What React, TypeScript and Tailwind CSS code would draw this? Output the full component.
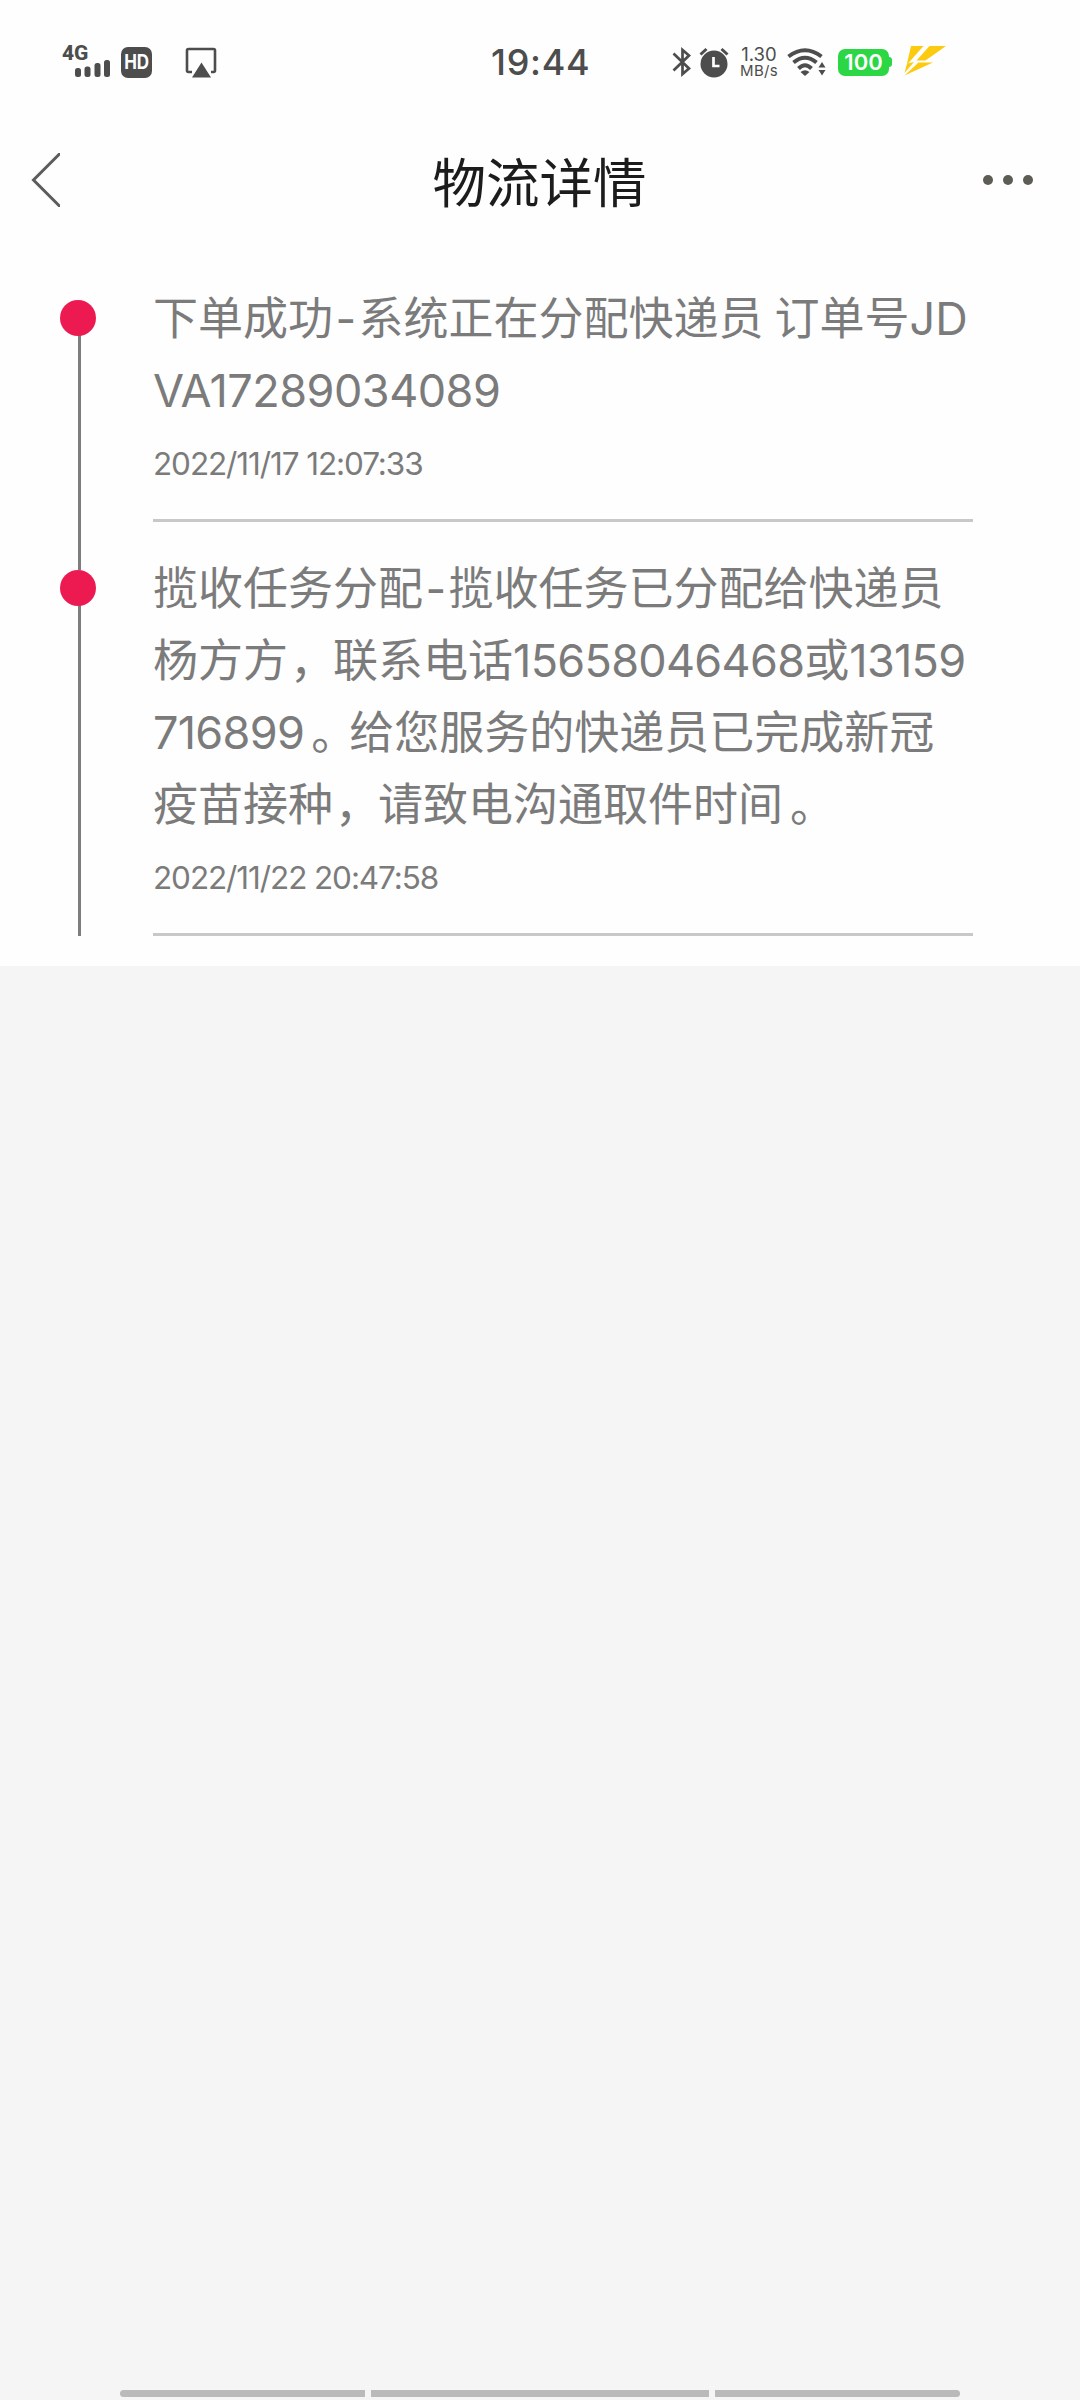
import type { ReactNode } from 'react';

function StatusBar() {
  return (
    <header className="flex h-[124px] shrink-0 items-center pl-[62px] text-[#4d4d4d]">
      <div className="relative h-[34px] w-[50px]">
        <span className="absolute top-0 left-0 font-['Roboto'] text-[21px] leading-[17px] font-extrabold">4G</span>
        <svg className="absolute bottom-[2px] left-[13px]" width="36" height="17" viewBox="0 0 36 17" fill="currentColor">
          <rect x="0" y="8" width="6" height="9" rx="2.5" />
          <rect x="9.5" y="6.5" width="6" height="10.5" rx="2.5" />
          <rect x="19.5" y="3" width="6" height="14" rx="2.5" />
          <rect x="29" y="0" width="6" height="17" rx="2.5" />
        </svg>
      </div>
      <div className="ml-[9px] flex size-[31px] items-center justify-center rounded-[7px] bg-[#4d4d4d]">
        <span className="scale-y-115 font-['Inter'] text-[17px] leading-none font-bold tracking-[-0.3px] text-white">HD</span>
      </div>
      <svg className="ml-[33px]" width="32" height="32" viewBox="0 0 32 32" fill="none">
        <path d="M7 26H3.5a1.5 1.5 0 0 1-1.5-1.5v-20A1.5 1.5 0 0 1 3.5 3h25A1.5 1.5 0 0 1 30 4.5v20a1.5 1.5 0 0 1-1.5 1.5H26" stroke="currentColor" strokeWidth="2.6" />
        <path d="M16.5 16.5L26 31.5H7z" fill="currentColor" />
      </svg>
      <time className="ml-[274px] w-[101px] font-['Inter'] text-[36px] leading-none font-medium tracking-[0.7px]">19:44</time>
      <svg className="ml-[80px] shrink-0" width="20" height="30" viewBox="0 0 20 30" fill="none" stroke="currentColor" strokeWidth="2.7">
        <path d="M1.5 6.5L17 21.5 10.5 27V3L17 8.5 1.5 23.5" />
      </svg>
      <svg className="ml-[6px] shrink-0" width="32" height="31" viewBox="0 0 32 31" fill="none">
        <circle cx="16" cy="17" r="13.5" fill="currentColor" />
        <path d="M2.5 7.5l6-5.5M29.5 7.5l-6-5.5" stroke="currentColor" strokeWidth="3" />
        <path d="M15.5 10v9h6" stroke="white" strokeWidth="2.7" />
      </svg>
      <div className="ml-[8px] flex w-[42px] flex-col items-center font-['Inter']">
        <span className="text-[18.5px] leading-[17px]">1.30</span>
        <span className="text-[15px] leading-[16px] tracking-[0.3px]">MB/s</span>
      </div>
      <svg className="ml-[7px] shrink-0" width="40" height="30" viewBox="0 0 40 30" fill="none" stroke="currentColor" strokeWidth="4">
        <path d="M1.5 9.5Q18 -3 34.5 9.5" />
        <path d="M6.5 15.5Q18 6 29.5 15.5" />
        <path d="M11.5 21.5Q18 15 24.5 21.5" />
        <path d="M13.5 25q4.5-3.5 9 0l-4.5 4z" fill="currentColor" stroke="none" />
        <path d="M31.5 20.5L35 15l3.5 5.5zM31.5 23h7L35 28.5z" fill="currentColor" stroke="none" />
      </svg>
      <div className="ml-[11px] flex items-center">
        <div className="flex h-[27px] w-[51px] items-center justify-center rounded-[7px] bg-[#2bd745] font-['Inter'] text-[22px] leading-none font-semibold text-white">100</div>
        <div className="h-[10px] w-[3px] rounded-r-[3px] bg-[#2bd745]" />
      </div>
      <svg className="mb-[3px] ml-[12px]" width="43" height="31" viewBox="0 0 43 31" fill="#fccb10">
        <path d="M7 1h12.5L4 18.5H3z" />
        <path d="M25.5 1H42L21.5 15.5H12.5z" />
        <path d="M3 18.5L10 17 0.5 28z" />
        <path d="M14.5 17.5H29L0.5 30.5z" />
      </svg>
    </header>
  );
}

function TitleBar() {
  return (
    <nav className="grid h-[117px] shrink-0 grid-cols-[1fr_auto_1fr] items-center">
      <svg className="mb-[5px] ml-[30px]" width="30" height="54" viewBox="0 0 30 54" fill="none" stroke="#5c5c5c" strokeWidth="3">
        <path d="M32 -1.5L3.5 27 32 55.5" />
      </svg>
      <h1 className="mt-[2px] mr-px text-[53.5px] leading-none font-normal text-[#1c1c1c]">物流详情</h1>
      <div className="mr-[47px] mb-[5px] flex justify-end gap-[10px]">
        <i className="size-[10px] rounded-full bg-[#5d5d56]" />
        <i className="size-[10px] rounded-full bg-[#5d5d56]" />
        <i className="size-[10px] rounded-full bg-[#5d5d56]" />
      </div>
    </nav>
  );
}

function Dash() {
  return <span className="inline-block w-[25.5px] text-center">-</span>;
}

function Num({ children }: { children: ReactNode }) {
  return <span className="tracking-[-0.7px]">{children}</span>;
}

/** Full-width full stop, set lower and nearer the middle of its cell. */
function Stop() {
  return <span className="relative top-[1px] left-[7px]">。</span>;
}

/** Full-width comma, set lower and nearer the middle of its cell. */
function Comma() {
  return <span className="relative top-[1px] left-[2px]">，</span>;
}

function Step({ lines, date }: { lines: ReactNode[]; date: ReactNode }) {
  return (
    <li className="group flex pl-[60px]">
      <div className="relative w-[93px] shrink-0">
        <div className="absolute top-[36px] -bottom-[48px] left-[18px] w-[3px] bg-[#7d7d7d] group-last:bottom-0" />
        <div className="relative mt-[18px] size-[36px] rounded-full bg-[#ed1a52]" />
      </div>
      <div className="w-[820px] border-b-[3px] border-[#c8c8c8]">
        {lines.map((line, i) => (
          <p key={i} className="h-[72px] text-[45px] leading-[74px] whitespace-nowrap">{line}</p>
        ))}
        <p className="h-[93px] text-[31.5px] leading-[75px] tracking-[-1.1px]">{date}</p>
      </div>
    </li>
  );
}

export default function App() {
  return (
    <div lang="zh-CN" className="flex h-[2400px] w-[1080px] flex-col overflow-hidden bg-[#f5f5f5] font-['Inter','Noto_Sans_CJK_SC',sans-serif]">
      <div className="flex h-[966px] shrink-0 flex-col bg-[#fefefe]">
        <StatusBar />
        <TitleBar />
        <ol className="mt-[41px] flex flex-col gap-[30px] overflow-hidden text-[#7b7b7b]">
          <Step
            lines={[
              <>下单成功<Dash />系统正在分配快递员<span className="inline-block w-[11px]"> </span>订单号JD</>,
              <span className="tracking-[-0.5px]">VA17289034089</span>,
            ]}
            date="2022/11/17 12:07:33"
          />
          <Step
            lines={[
              <>揽收任务分配<Dash />揽收任务已分配给快递员</>,
              <>杨方方<Comma />联系电话<Num>15658046468</Num>或<Num>13159</Num></>,
              <><Num>716899</Num><Stop />给您服务的快递员已完成新冠</>,
              <>疫苗接种<Comma />请致电沟通取件时间<Stop /></>,
            ]}
            date="2022/11/22 20:47:58"
          />
        </ol>
      </div>
      <div className="mt-auto mb-[3px] flex gap-[6px] px-[120px]">
        <div className="h-[7px] w-[245px] rounded-l-full bg-[#bababa]" />
        <div className="h-[7px] flex-1 bg-[#bababa]" />
        <div className="h-[7px] w-[245px] rounded-r-full bg-[#bababa]" />
      </div>
    </div>
  );
}
